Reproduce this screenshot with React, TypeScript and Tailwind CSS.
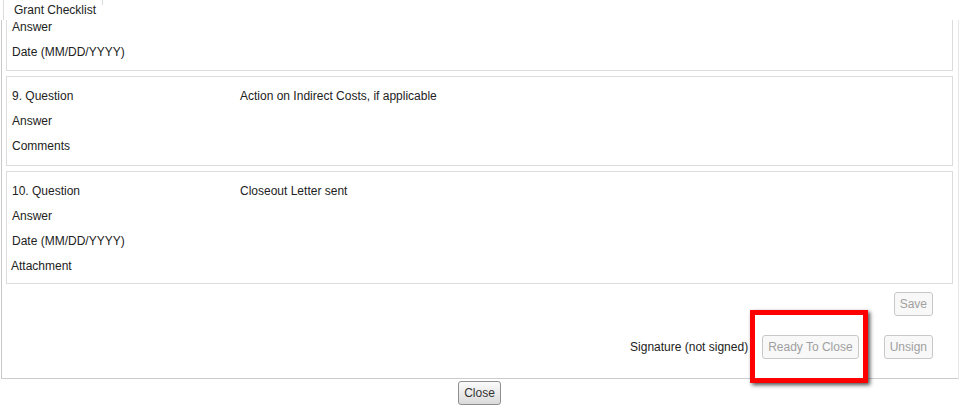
type Row = { label: string; value?: string; className?: string };

const CARDS: { rows: Row[]; className: string }[] = [
  {
    rows: [{ label: 'Answer' }, { label: 'Date (MM/DD/YYYY)' }],
    className: 'border-t-0 pb-[6px]',
  },
  {
    rows: [
      { label: '9. Question', value: 'Action on Indirect Costs, if applicable' },
      { label: 'Answer' },
      { label: 'Comments' },
    ],
    className: 'mt-[5px] pt-[6px] pb-[7px]',
  },
  {
    rows: [
      { label: '10. Question', value: 'Closeout Letter sent' },
      { label: 'Answer' },
      { label: 'Date (MM/DD/YYYY)' },
      { label: 'Attachment', className: '-ml-px' },
    ],
    className: 'mt-[5px] pt-[6px] pb-[5px]',
  },
];

function Card({ rows, className }: { rows: Row[]; className: string }) {
  return (
    <div className={`border border-[#dcdcdc] pl-[5px] ${className}`}>
      {rows.map((row) => (
        <div key={row.label} className="flex h-[25px] leading-[27px]">
          <span className={`w-[228px] shrink-0 ${row.className ?? ''}`}>{row.label}</span>
          {row.value && <span>{row.value}</span>}
        </div>
      ))}
    </div>
  );
}

function Button({ label, disabled = true }: { label: string; disabled?: boolean }) {
  return (
    <button
      className={
        disabled
          ? 'h-[24px] rounded-[3px] border border-[#c8c8c8] bg-[#f8f8f8] px-[5px] text-[12px] text-[#a0a0a0]'
          : 'h-[24px] rounded-[3px] border border-[#8e8e8e] bg-gradient-to-b from-[#fbfbfb] to-[#dadada] px-[5px] text-[12px] text-[#333]'
      }
    >
      {label}
    </button>
  );
}

export default function App() {
  return (
    <div className="relative h-[405px] w-[959px] overflow-hidden bg-white font-['Liberation_Sans',Arial,sans-serif] text-[12px] text-[#222]">
      <div className="ml-[3px] flex h-[20px] w-[100px] border-l border-[#dcdcdc] bg-white">
        <span className="flex-1 pl-[10px] leading-[20px]">Grant Checklist</span>
        <span className="h-[5px] w-px bg-[#dcdcdc]" />
      </div>

      <div className="ml-[1px] h-[359px] overflow-hidden border-x border-b border-l-[#c8c8c8] border-r-[#e6e6e6] border-b-[#cccccc]">
        <div className="-mt-[6px] pl-[4px] pr-[5px]">
          {CARDS.map((card, i) => (
            <Card key={i} rows={card.rows} className={card.className} />
          ))}
        </div>

        <div className="mt-[8px] flex justify-end pr-[25px]">
          <Button label="Save" />
        </div>

        <div className="mt-[19px] flex items-center justify-end pr-[25px]">
          <span className="mr-[14px]">Signature (not signed)</span>
          <Button label="Ready To Close" />
          <span className="w-[25px]" />
          <Button label="Unsign" />
        </div>
      </div>

      <div className="mt-[2px] flex justify-center">
        <Button label="Close" disabled={false} />
      </div>

      {/* annotation highlight */}
      <div className="absolute left-[750px] top-[310px] h-[73px] w-[118px] border-[5px] border-[#ff0000] shadow-[2px_2px_4px_rgba(0,0,0,0.7)]" />
    </div>
  );
}
